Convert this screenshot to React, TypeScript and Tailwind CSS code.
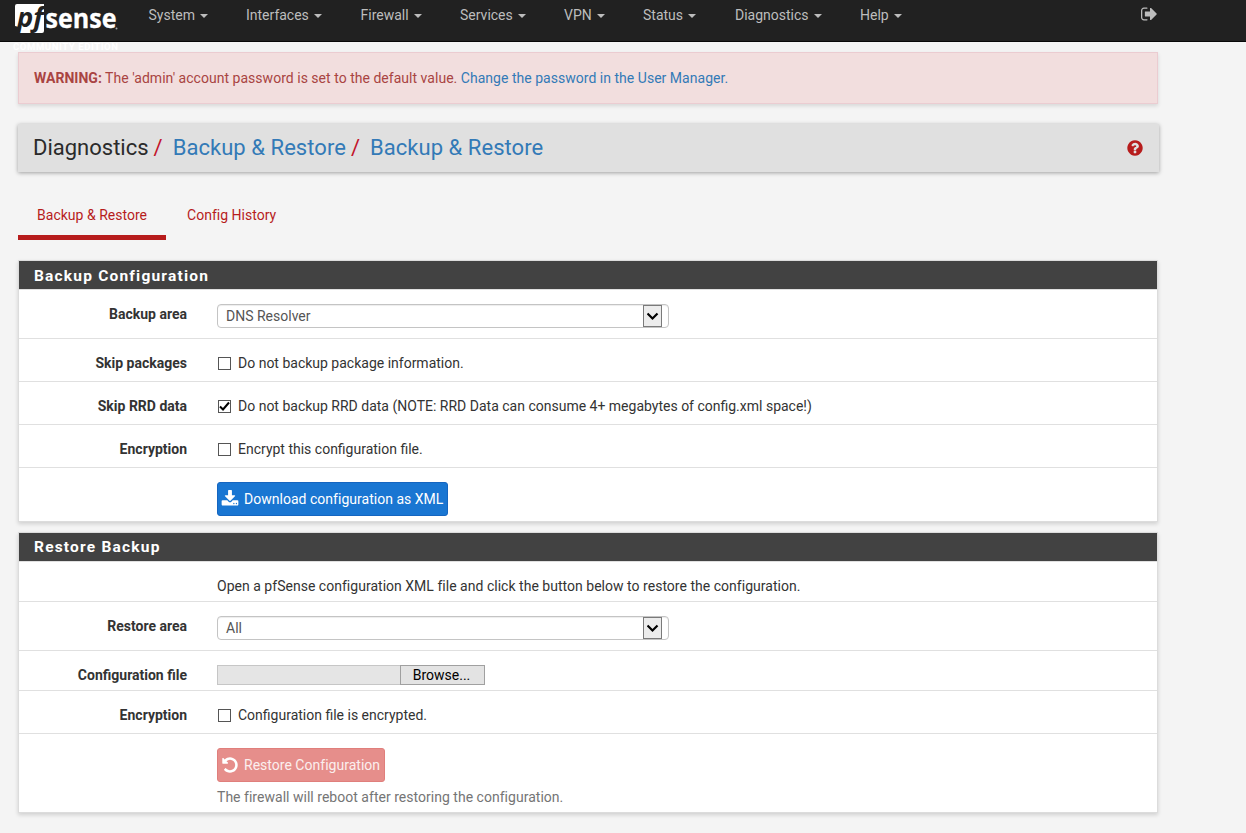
import type { ReactNode } from "react";

const SIGN_OUT =
  "M640 1440q0 4 1 20t.5 26.5-3 23.5-10 19.5-20.5 6.5h-320q-119 0-203.5-84.5t-84.5-203.5v-704q0-119 84.5-203.5t203.5-84.5h320q13 0 22.5 9.5t9.5 22.5q0 4 1 20t.5 26.5-3 23.5-10 19.5-20.5 6.5h-320q-66 0-113 47t-47 113v704q0 66 47 113t113 47h312l11.5 1 11.5 3 8 5.5 7 9 2 13.5zm928-544q0 26-19 45l-544 544q-19 19-45 19t-45-19-19-45v-288h-448q-26 0-45-19t-19-45v-384q0-26 19-45t45-19h448v-288q0-26 19-45t45-19 45 19l544 544q19 19 19 45z";
const UNDO =
  "M1664 896q0 156-61 298t-164 245-245 164-298 61q-172 0-327-72.5t-264-204.5q-7-10-6.5-22.5t8.5-20.5l137-138q10-9 25-9 16 2 23 12 73 95 179 147t225 52q104 0 198.5-40.5t163.5-109.5 109.5-163.5 40.5-198.5-40.5-198.5-109.5-163.5-163.5-109.5-198.5-40.5q-98 0-188 35.5t-160 101.5l137 138q31 30 14 69-17 40-59 40h-448q-26 0-45-19t-19-45v-448q0-42 40-59 39-17 69 14l130 129q107-101 244.5-156.5t284.5-55.5q156 0 298 61t245 164 164 245 61 298z";
const DOWNLOAD =
  "M1344 1344q0-26-19-45t-45-19-45 19-19 45 19 45 45 19 45-19 19-45zm256 0q0-26-19-45t-45-19-45 19-19 45 19 45 45 19 45-19 19-45zm128-224v320q0 40-28 68t-68 28h-1472q-40 0-68-28t-28-68v-320q0-40 28-68t68-28h465l135 136q58 56 136 56t136-56l136-136h464q40 0 68 28t28 68zm-325-569q17 41-14 70l-448 448q-18 19-45 19t-45-19l-448-448q-31-29-14-70 17-39 59-39h256v-448q0-26 19-45t45-19h256q26 0 45 19t19 45v448h256q42 0 59 39z";
const QUESTION =
  "M1024 1376v-192q0-14-9-23t-23-9h-192q-14 0-23 9t-9 23v192q0 14 9 23t23 9h192q14 0 23-9t9-23zm256-672q0-88-55.5-163t-138.5-116-170-41q-243 0-371 213-15 24 8 42l132 100q7 6 19 6 16 0 25-12 53-68 86-92 34-24 86-24 48 0 85.5 26t37.5 59q0 38-20 61t-68 45q-63 28-115.5 86.5t-52.5 125.5v36q0 14 9 23t23 9h192q14 0 23-9t9-23q0-19 21.5-49.5t54.5-49.5q32-18 49-28.5t46-35 44.5-48 28-60.5 12.5-81zm384 192q0 209-103 385.5t-279.5 279.5-385.5 103-385.5-103-279.5-279.5-103-385.5 103-385.5 279.5-279.5 385.5-103 385.5 103 279.5 279.5 103 385.5z";

function Icon({ d, className }: { d: string; className: string }) {
  return (
    <svg viewBox="0 0 1792 1792" fill="currentColor" className={className}>
      <path d={d} />
    </svg>
  );
}

const MENU = [
  { label: "System", width: "w-[97.500px]" },
  { label: "Interfaces", width: "w-[114.500px]" },
  { label: "Firewall", width: "w-[99.500px]" },
  { label: "Services", width: "w-[104px]" },
  { label: "VPN", width: "w-[79px]" },
  { label: "Status", width: "w-[92px]" },
  { label: "Diagnostics", width: "w-[125px]" },
  { label: "Help", width: "w-[80px]" },
];

function Logo() {
  return (
    <div className="relative w-[134px] shrink-0">
      <svg width="134" height="41" viewBox="0 0 134 41" className="block">
        <path d="M17 4H44V31Q44 33 42 33H18L19 27L15 26V6Q15 4 17 4Z" fill="#fff" />
        <text x="17" y="27" fontFamily="Open Sans" fontWeight="700" fontStyle="italic" fontSize="26" textLength="26.500" lengthAdjust="spacingAndGlyphs" fill="#212121">
          pf
        </text>
        <text x="45.500" y="27.500" fontFamily="Open Sans" fontWeight="700" fontSize="26" textLength="71" lengthAdjust="spacingAndGlyphs" fill="#fff" stroke="#fff" strokeWidth="0.300">
          sense
        </text>
        <circle cx="116.500" cy="28.500" r="1" fill="#aaa" />
      </svg>
      <div className="absolute top-[42px] left-[13px] text-[9.500px] leading-[9px] font-bold tracking-[0.600px] whitespace-nowrap text-white">
        COMMUNITY EDITION
      </div>
    </div>
  );
}

function Row({ label, height, children }: { label?: string; height: string; children: ReactNode }) {
  return (
    <div className={`flex border-b border-[#e0e0e0] last:border-b-0 ${height}`}>
      <div className="w-[168px] shrink-0 pt-[14px] text-right font-bold">{label}</div>
      <div className="ml-[30px] flex-1">{children}</div>
    </div>
  );
}

function Select({ value }: { value: string }) {
  return (
    <div className="mt-[14px] flex h-[24px] w-[452px] items-center rounded-[4px] border border-[#c4c4c4] bg-white pr-[6px] pl-[8px] text-[#555] shadow-[inset_0_1px_1px_rgba(0,0,0,0.075)]">
      <span className="flex-1">{value}</span>
      <span className="flex h-[22px] w-[19px] items-center justify-center border border-[#7a7a7a] bg-[#ececec]">
        <svg width="12" height="9" viewBox="0 0 12 9" fill="none" stroke="#000" strokeWidth="2.200">
          <path d="M0.500 1.500L5.500 6.500L10.500 1.500" />
        </svg>
      </span>
    </div>
  );
}

function Check({ checked = false, children }: { checked?: boolean; children: ReactNode }) {
  return (
    <label className="mt-[14px] flex h-[20px] items-center">
      <span className="ml-[1px] flex h-[13px] w-[13px] items-center justify-center border border-[#555] bg-white">
        {checked && (
          <svg width="11" height="11" viewBox="0 0 11 11" fill="none" stroke="#000" strokeWidth="2">
            <path d="M1 5.500L4 8.500L10 1.500" />
          </svg>
        )}
      </span>
      <span className="ml-[7px]">{children}</span>
    </label>
  );
}

function Panel({ title, titleLine, children, className }: { title: string; titleLine: string; children: ReactNode; className: string }) {
  return (
    <section className={`border border-[#dcdcdc] bg-white shadow-[0_2px_4px_rgba(0,0,0,0.15)] ${className}`}>
      <h2 className={`h-[29px] border-b border-[#e0e0e0] bg-[#424242] pl-[15px] text-[15.500px] font-bold tracking-[1.200px] text-white ${titleLine}`}>
        {title}
      </h2>
      {children}
    </section>
  );
}

export default function App() {
  return (
    <div className="h-[833px] overflow-hidden bg-[#f4f4f4] font-['Roboto',sans-serif] text-[14px] leading-[20px] text-[#333]">
      <header className="relative flex h-[42px] border-b border-[#080808] bg-[#212121]">
        <Logo />
        <nav className="flex pt-[5px] pl-[14.500px] text-[#bdbdbd]">
          {MENU.map((m) => (
            <a key={m.label} className={`flex h-[20px] items-center ${m.width}`}>
              {m.label}
              <span className="mt-[2px] ml-[5px] border-x-4 border-t-4 border-x-transparent border-t-[#bdbdbd]" />
            </a>
          ))}
        </nav>
        <Icon d={SIGN_OUT} className="mt-[5px] ml-[200.500px] size-[18px] text-[#bdbdbd]" />
      </header>

      <main className="w-[1159px] pt-[10px] pl-[18px]">
        <div className="h-[52px] w-[1140px] border border-[#ebccd1] bg-[#f2dede] pt-[15px] pl-[15px] tracking-[0.025px] text-[#a94442] shadow-[0_2px_4px_rgba(0,0,0,0.12)]">
          <b>WARNING:</b> The 'admin' account password is set to the default value.{" "}
          <a className="text-[#337ab7]">Change the password in the User Manager.</a>
        </div>

        <div className="mt-[20px] flex h-[48px] w-[1141px] items-center bg-[#e0e0e0] pr-[15px] pl-[15px] text-[22px] shadow-[0_1px_4px_rgba(0,0,0,0.35)]">
          <span className="text-[#2b2b2b]">Diagnostics</span>
          <span className="ml-[5px] text-[#c3142b]">/</span>
          <a className="ml-[10px] tracking-[0.050px] text-[#337ab7]">Backup &amp; Restore</a>
          <span className="ml-[5px] text-[#c3142b]">/</span>
          <a className="ml-[10px] tracking-[0.050px] text-[#337ab7]">Backup &amp; Restore</a>
          <Icon d={QUESTION} className="ml-auto size-[18px] text-[#b71c1c]" />
        </div>

        <div className="mt-[20px] flex h-[48px] tracking-[0.020px] text-[#b71c1c]">
          <a className="w-[148px] border-b-5 border-[#b71c1c] pt-[13px] pl-[19px]">Backup &amp; Restore</a>
          <a className="pt-[13px] pl-[21px]">Config History</a>
        </div>

        <Panel title="Backup Configuration" titleLine="leading-[30px]" className="mt-[20px] h-[262px] w-[1140px]">
          <Row label="Backup area" height="h-[49px]">
            <Select value="DNS Resolver" />
          </Row>
          <Row label="Skip packages" height="h-[43px]">
            <Check>Do not backup package information.</Check>
          </Row>
          <Row label="Skip RRD data" height="h-[43px]">
            <Check checked>Do not backup RRD data (NOTE: RRD Data can consume 4+ megabytes of config.xml space!)</Check>
          </Row>
          <Row label="Encryption" height="h-[43px]">
            <Check>Encrypt this configuration file.</Check>
          </Row>
          <Row height="h-[53px]">
            <button className="mt-[14px] flex h-[34px] w-[231px] items-center rounded-[3px] border border-[#1565c0] bg-[#1976d2] pl-[3px] tracking-[0.020px] whitespace-nowrap text-white">
              <Icon d={DOWNLOAD} className="size-[18px]" />
              <span className="ml-[5px]">Download configuration as XML</span>
            </button>
          </Row>
        </Panel>

        <Panel title="Restore Backup" titleLine="leading-[28px]" className="mt-[10px] h-[281px] w-[1140px]">
          <Row height="h-[40px]">
            <div className="pt-[14px] tracking-[0.022px]">
              Open a pfSense configuration XML file and click the button below to restore the configuration.
            </div>
          </Row>
          <Row label="Restore area" height="h-[49px]">
            <Select value="All" />
          </Row>
          <Row label="Configuration file" height="h-[40px]">
            <div className="mt-[14px] flex h-[20px] w-[268px]">
              <span className="flex-1 border border-r-0 border-[#c6c6c6] bg-[#e5e5e5]" />
              <span className="flex w-[85px] items-center justify-center border border-[#a0a0a0] bg-[#e3e3e3] pr-[2px] text-black">Browse...</span>
            </div>
          </Row>
          <Row label="Encryption" height="h-[43px]">
            <Check>Configuration file is encrypted.</Check>
          </Row>
          <Row height="h-[78px]">
            <button className="mt-[14px] flex h-[34px] w-[168px] items-center rounded-[3px] border border-[#e07f7c] bg-[#e68e8b] pl-[3px] tracking-[0.020px] whitespace-nowrap text-[#fbeeee]">
              <Icon d={UNDO} className="size-[18px] text-white" />
              <span className="ml-[5px]">Restore Configuration</span>
            </button>
            <div className="mt-[5px] tracking-[0.022px] text-[#757575]">The firewall will reboot after restoring the configuration.</div>
          </Row>
        </Panel>
      </main>
    </div>
  );
}
